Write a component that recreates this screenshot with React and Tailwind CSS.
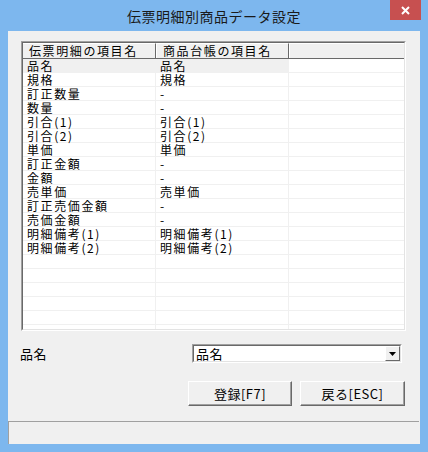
import React from "react";

const rows = [
  ["品名", "品名"],
  ["規格", "規格"],
  ["訂正数量", "-"],
  ["数量", "-"],
  ["引合(1)", "引合(1)"],
  ["引合(2)", "引合(2)"],
  ["単価", "単価"],
  ["訂正金額", "-"],
  ["金額", "-"],
  ["売単価", "売単価"],
  ["訂正売価金額", "-"],
  ["売価金額", "-"],
  ["明細備考(1)", "明細備考(1)"],
  ["明細備考(2)", "明細備考(2)"],
];

const font = { fontFamily: '"Noto Sans CJK JP", "Noto Sans", sans-serif' };

export default function App() {
  const allRows = [...rows];
  while (allRows.length < 20) allRows.push(["", ""]);

  return (
    <div
      style={font}
      className="w-[428px] h-[452px] bg-[#7db7ee] flex flex-col px-[8px] pb-[8px] text-[#000] overflow-hidden"
    >
      {/* title bar */}
      <div className="relative h-[31px] flex items-center justify-center">
        <span className="text-[14px] text-[#1a1a1a] tracking-[0.5px] mt-[1px]">伝票明細別商品データ設定</span>
        <div className="absolute right-[-1px] top-0 w-[31px] h-[20px] bg-[#c75050] flex items-center justify-center">
          <svg width="9" height="9" viewBox="0 0 9 9">
            <path d="M1 1 L8 8 M8 1 L1 8" stroke="#fff" strokeWidth="2" />
          </svg>
        </div>
      </div>

      {/* client */}
      <div className="flex-1 bg-[#f0f0f0] flex flex-col pt-[10px]">
        {/* list view */}
        <div className="ml-[13px] w-[385px] h-[290px] border border-t-[#a0a0a0] border-l-[#a0a0a0] border-r-white border-b-white">
          <div className="w-full h-full border border-t-[#696969] border-l-[#696969] border-r-[#e3e3e3] border-b-[#e3e3e3] bg-white overflow-hidden flex flex-col">
            <div className="flex h-[16px] shrink-0 bg-[#f0f0f0] border-b border-[#696969] text-[12px] leading-[14px] tracking-[1.6px]">
              <div className="w-[133px] pl-[6px] border-r border-[#696969] border-t border-t-white">伝票明細の項目名</div>
              <div className="w-[133px] pl-[6px] border-r border-[#696969] border-l border-l-white border-t border-t-white">商品台帳の項目名</div>
              <div className="flex-1 border-l border-l-white border-t border-t-white" />
            </div>
            {allRows.map((r, i) => (
              <div key={i} className="flex h-[14px] shrink-0 text-[12px] leading-[13px] tracking-[1.6px]">
                <div className={`w-[133px] pl-[4px] border-r border-b border-[#f0f0f0] ${i === 0 ? "bg-[#f0f0f0]" : ""}`}>{r[0]}</div>
                <div className={`w-[133px] pl-[4px] border-r border-b border-[#f0f0f0] ${i === 0 ? "bg-[#f0f0f0]" : ""}`}>{r[1]}</div>
                <div className="flex-1 border-b border-[#f0f0f0]" />
              </div>
            ))}
          </div>
        </div>

        {/* combo row */}
        <div className="flex items-center mt-[13px] h-[19px]">
          <div className="w-[184px] pl-[12px] text-[13px] tracking-[0.5px]">品名</div>
          <div className="w-[210px] h-[19px] border border-t-[#a0a0a0] border-l-[#a0a0a0] border-r-white border-b-white">
            <div className="h-full border border-t-[#696969] border-l-[#696969] border-r-[#e3e3e3] border-b-[#e3e3e3] bg-white flex items-center">
              <span className="flex-1 pl-[2px] text-[13px] leading-[15px] tracking-[0.5px]">品名</span>
              <div className="w-[15px] h-full bg-[#f0f0f0] border border-t-white border-l-white border-r-[#696969] border-b-[#696969] flex items-center justify-center">
                <svg width="7" height="4" viewBox="0 0 7 4">
                  <path d="M0 0 H7 L3.5 4 Z" fill="#000" />
                </svg>
              </div>
            </div>
          </div>
        </div>

        {/* buttons */}
        <div className="flex mt-[18px] pl-[180px] gap-[8px]">
          <button className="w-[104px] h-[25px] bg-[#f0f0f0] border border-t-white border-l-white border-r-[#696969] border-b-[#696969] text-[13px] tracking-[0.5px] shadow-[inset_-1px_-1px_0_#a0a0a0]">
            登録[F7]
          </button>
          <button className="w-[105px] h-[25px] bg-[#f0f0f0] border border-t-white border-l-white border-r-[#696969] border-b-[#696969] text-[13px] tracking-[0.5px] shadow-[inset_-1px_-1px_0_#a0a0a0]">
            戻る[ESC]
          </button>
        </div>

        <div className="flex-1" />

        {/* status bar */}
        <div className="h-[23px] border-t border-l border-[#a0a0a0] mr-[1px]" />
      </div>
    </div>
  );
}
